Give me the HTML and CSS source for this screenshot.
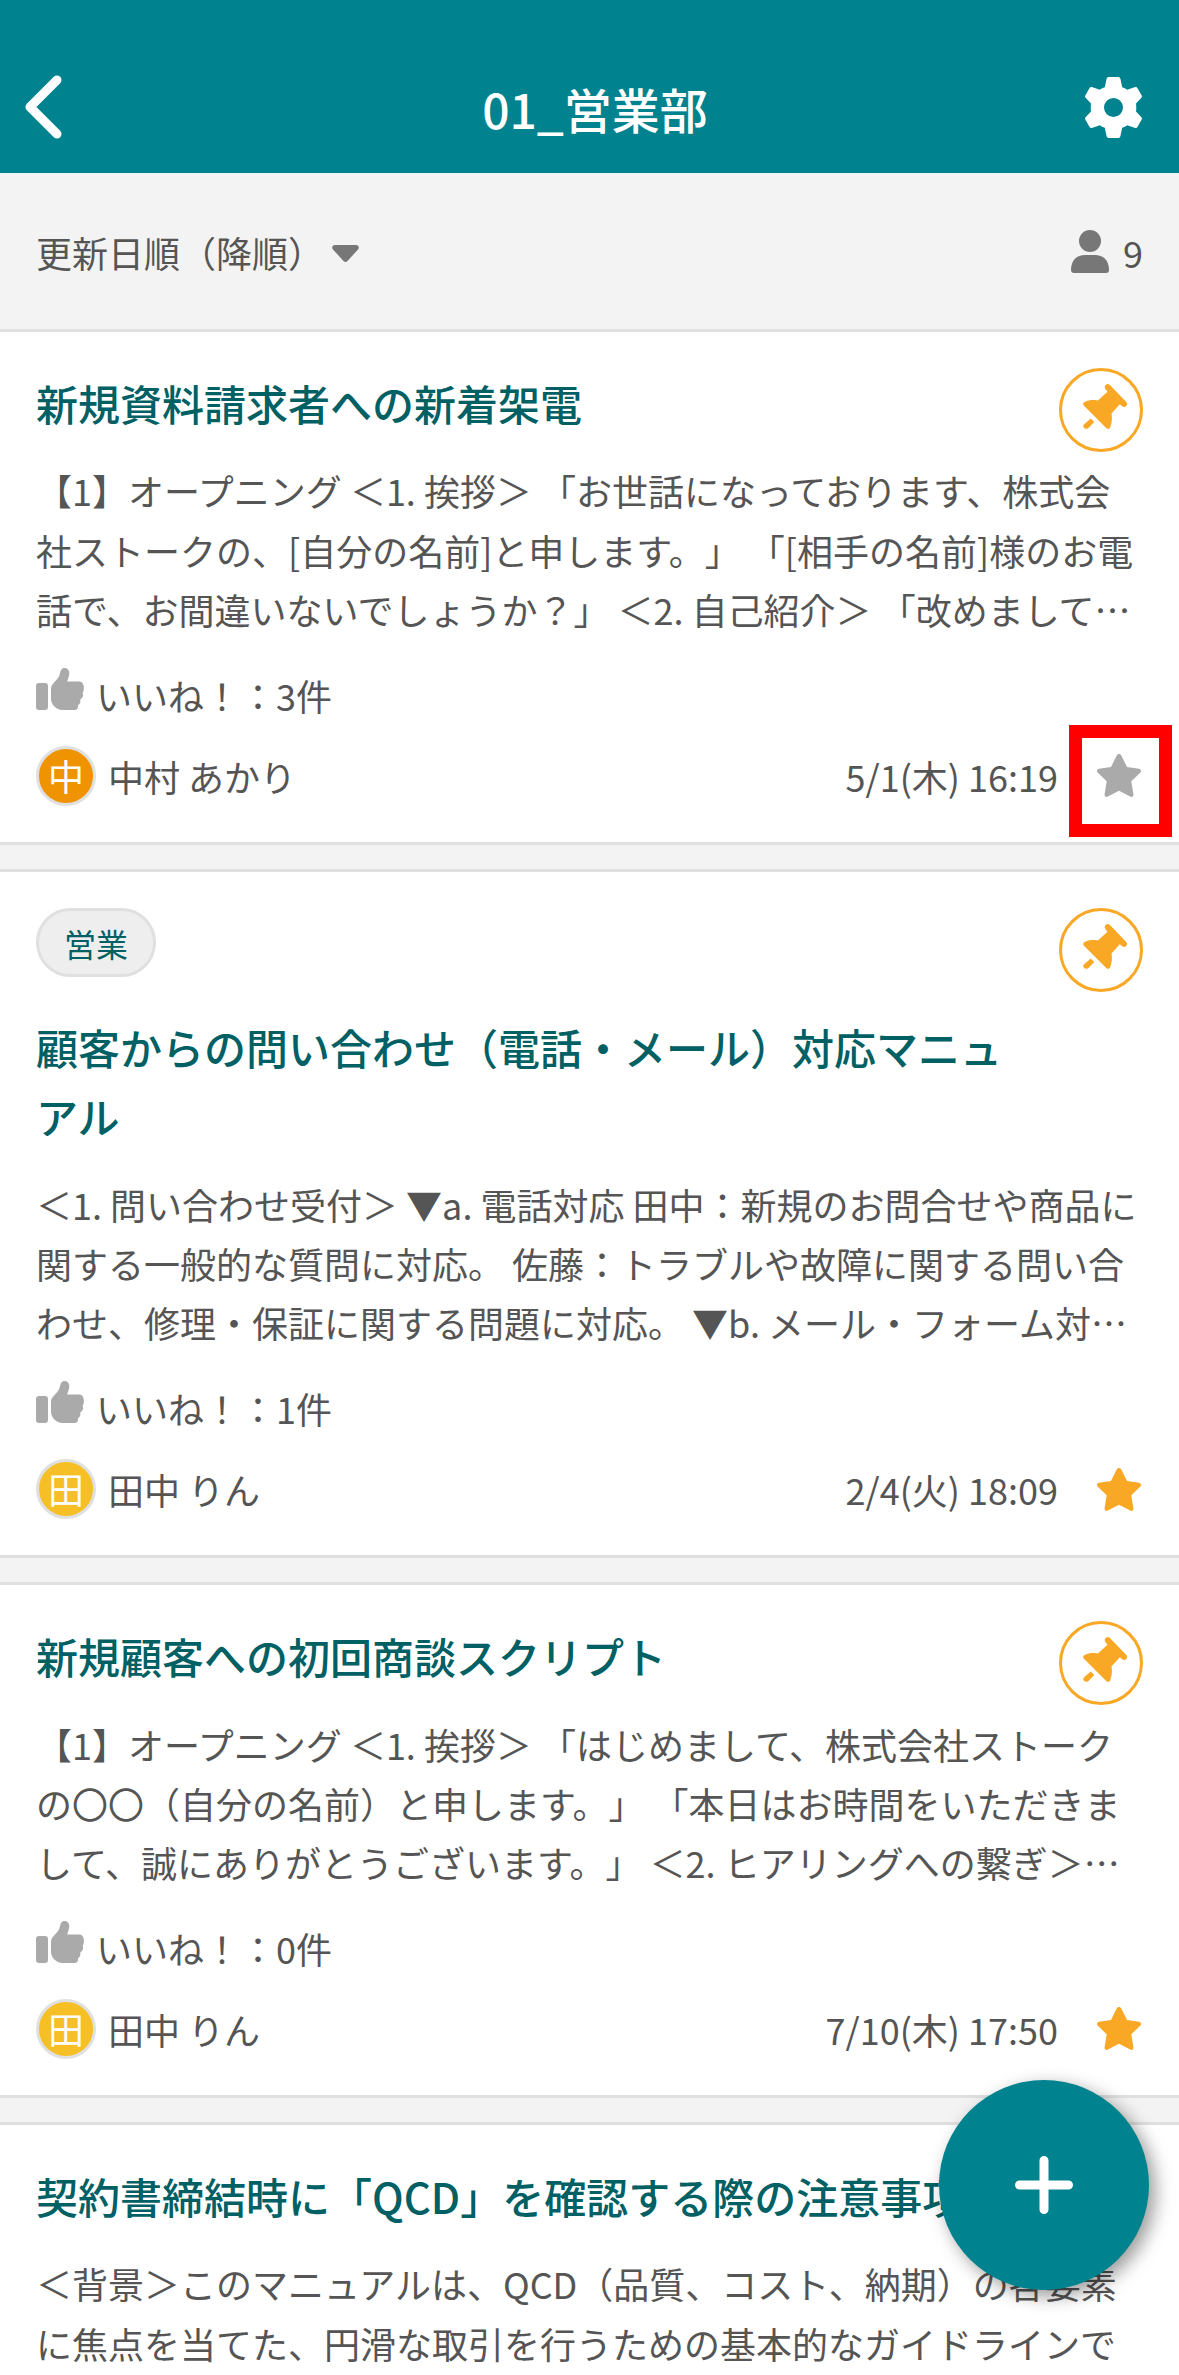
FILE: index.html
```html
<!DOCTYPE html>
<html lang="ja">
<head>
<meta charset="utf-8">
<title>01_営業部</title>
<link rel="stylesheet" href="styles.css">
</head>
<body>
<svg class="sprite" aria-hidden="true">
  <symbol id="thumb" viewBox="0 0 48 42">
    <rect x="0" y="15" width="12" height="27" rx="3"/>
    <path d="M28.5 0C25.600 0 24.600 2.500 24 5.200C23.200 9 21.500 10.800 19.200 13.200C16.500 16 15 17.800 15 20.800V31C15 36 20 42 26.500 42H38.500C41.500 42 42.500 39.500 41.900 37.200C44 36 44.800 33.800 44.200 31.500C47 30 47.700 27.300 46.600 24.800C49 21.500 48.200 13.500 43.500 13.500H31.200C32 10.300 33.300 8 33.300 5C33.300 2 31.400 0 28.500 0Z"/>
  </symbol>
  <symbol id="star" viewBox="0 0 44 43">
    <path d="M19.700 1.500C20.700-.5 23.300-.5 24.300 1.500L30 12.900L42 14.700C44 15 44.600 17.300 43.200 18.700L34.300 27.300L36.400 40.200C36.700 42.300 34.900 43.500 33.200 42.600L22 36.800L10.800 42.600C9.100 43.500 7.300 42.300 7.600 40.200L9.700 27.300L.8 18.700C-.6 17.300 0 15 2 14.700L14 12.900Z"/>
  </symbol>
  <symbol id="pin" viewBox="0 0 44 45">
    <path d="M22.600 1C24 -.3 25.700 -.1 26.900 1.100L43.100 17.800C44.400 19.200 44.400 20.800 43.200 22C42 23.300 40.400 23.200 38.600 21.700L36.800 20.300L28.500 29.500C29.400 34.500 28.700 39 27.200 43.300C26.500 45.200 24.500 45.300 23.200 44L1 21.800C-.3 20.500-.2 18.700 1.700 17.900C5.800 16.200 10.300 15.600 14.900 16.600L24.500 7.800L22.700 5.600C21.500 4 21.400 2.300 22.600 1Z"/>
    <path d="M7.800 34.500L11.200 37.900L5.500 44C2.500 46.500-1.200 42.800.8 40.600Z"/>
  </symbol>
</svg>

<header class="header">
  <svg class="back" viewBox="0 0 38 64"><path d="M33 5L6 32L33 59"/></svg>
  <h1 class="heading">01_営業部</h1>
  <svg class="gear" viewBox="0 0 57 61"><path fill-rule="evenodd" d="M23.500 0H33.500Q35 0 35.400 1.800L37.200 10.200Q40 11 42.200 12.700L50.200 10.100Q51.600 9.600 52.400 10.900L56.700 18.500Q57.300 19.900 56.200 21L51 26.500Q51.500 30.500 51 34.500L56.200 40Q57.300 41.100 56.700 42.500L52.400 50.100Q51.600 51.400 50.200 50.900L42.200 48.300Q40 50 37.200 50.800L35.400 59.200Q35 61 33.500 61H23.500Q22 61 21.600 59.200L19.800 50.800Q17 50 14.800 48.300L6.800 50.900Q5.400 51.400 4.600 50.100L.3 42.500Q-.3 41.100.8 40L6 34.500Q5.500 30.500 6 26.500L.8 21Q-.3 19.900.3 18.500L4.600 10.900Q5.400 9.600 6.800 10.100L14.800 12.700Q17 11 19.800 10.200L21.600 1.800Q22 0 23.500 0ZM28.500 21A9.500 9.500 0 1 0 28.500 40A9.500 9.500 0 1 0 28.500 21Z"/></svg>
</header>

<div class="toolbar">
  <div class="sort"><span>更新日順（降順）</span><svg class="caret" viewBox="0 0 27 17"><path d="M3 0H24C26.500 0 27.700 2.500 26 4.500L15.500 16C14.300 17.300 12.700 17.300 11.500 16L1 4.500C-.7 2.500.5 0 3 0Z"/></svg></div>
  <div class="members"><svg class="person" viewBox="0 0 38 43"><circle cx="19" cy="11" r="11"/><path d="M0 40C0 30 6 25 14 25H24C32 25 38 30 38 40Q38 43 35 43H3Q0 43 0 40Z"/></svg><span>9</span></div>
</div>

<main class="list">
  <article class="card">
    <div class="pin"><svg><use href="#pin"/></svg></div>
    <h2 class="title">新規資料請求者への新着架電</h2>
    <p class="excerpt">【1】オープニング ＜1. 挨拶＞ 「お世話になっております、株式会<br>社ストークの、[自分の名前]と申します。」 「[相手の名前]様のお電<br>話で、お間違いないでしょうか？」 ＜2. 自己紹介＞ 「改めまして…</p>
    <div class="likes"><svg><use href="#thumb"/></svg><span>いいね！：3件</span></div>
    <div class="meta"><span class="avatar orange">中</span><span class="name">中村 あかり</span><time>5/1(木) 16:19</time><span class="fav highlight"><svg><use href="#star"/></svg></span></div>
  </article>

  <article class="card">
    <div class="pin"><svg><use href="#pin"/></svg></div>
    <span class="tag">営業</span>
    <h2 class="title">顧客からの問い合わせ（電話・メール）対応マニュアル</h2>
    <p class="excerpt">＜1. 問い合わせ受付＞ ▼a. 電話対応 田中：新規のお問合せや商品に<br>関する一般的な質問に対応。 佐藤：トラブルや故障に関する問い合<br>わせ、修理・保証に関する問題に対応。 ▼b. メール・フォーム対…</p>
    <div class="likes"><svg><use href="#thumb"/></svg><span>いいね！：1件</span></div>
    <div class="meta"><span class="avatar yellow">田</span><span class="name">田中 りん</span><time>2/4(火) 18:09</time><span class="fav on"><svg><use href="#star"/></svg></span></div>
  </article>

  <article class="card">
    <div class="pin"><svg><use href="#pin"/></svg></div>
    <h2 class="title">新規顧客への初回商談スクリプト</h2>
    <p class="excerpt">【1】オープニング ＜1. 挨拶＞ 「はじめまして、株式会社ストーク<br>の〇〇（自分の名前）と申します。」 「本日はお時間をいただきま<br>して、誠にありがとうございます。」 ＜2. ヒアリングへの繋ぎ＞…</p>
    <div class="likes"><svg><use href="#thumb"/></svg><span>いいね！：0件</span></div>
    <div class="meta"><span class="avatar yellow">田</span><span class="name">田中 りん</span><time>7/10(木) 17:50</time><span class="fav on"><svg><use href="#star"/></svg></span></div>
  </article>

  <article class="card">
    <h2 class="title">契約書締結時に「QCD」を確認する際の注意事項</h2>
    <p class="excerpt">＜背景＞このマニュアルは、QCD（品質、コスト、納期）の各要素<br>に焦点を当てた、円滑な取引を行うための基本的なガイドラインで</p>
  </article>
</main>

<button class="fab" aria-label="追加"><svg viewBox="0 0 58 58"><path d="M29 4.500V53.500M4.500 29H53.500"/></svg></button>
</body>
</html>
```

FILE: styles.css
```css
*, *::after { box-sizing: border-box; }

body {
  margin: 0;
  height: 2375px;
  overflow: hidden;
  position: relative;
  background: #f3f3f3;
  color: #555;
  font: 36px/59.4px "Noto Sans CJK JP", sans-serif;
  text-spacing-trim: space-all;
}

h1, h2, p { margin: 0; }

svg { display: block; flex: none; }

.sprite { position: absolute; width: 0; height: 0; }

.header {
  height: 173px;
  padding: 41px 37px 0 24px;
  display: grid;
  grid-template-columns: 91px 1fr 67px;
  align-items: center;
  background: #00838f;
  color: #fff;
}

.back { width: 38px; height: 64px; fill: none; stroke: #fff; stroke-width: 9; stroke-linecap: round; stroke-linejoin: round; }
.heading { padding-top: 1px; text-align: center; font-size: 48px; line-height: 72px; font-weight: 500; }
.gear { width: 57px; height: 61px; justify-self: end; fill: #fff; }

.toolbar {
  height: 156px;
  padding: 0 36px;
  display: flex;
  justify-content: space-between;
  align-items: center;
}

.sort, .members { display: flex; align-items: center; padding-top: 1px; }
.sort span, .members span { padding-top: 2px; }
.caret { width: 27px; height: 17px; margin: 3px 0 0 8px; fill: #777; }
.person { width: 38px; height: 43px; margin-right: 14px; fill: #777; }

.list { display: flex; flex-direction: column; gap: 24px; }

.card {
  position: relative;
  padding: 36px;
  background: #fff;
  border-top: 3px solid #e0e0e0;
  border-bottom: 3px solid #e0e0e0;
}

.pin {
  position: absolute;
  top: 36px;
  right: 36px;
  width: 84px;
  height: 84px;
  padding: 13px 0 0 21px;
  border: 3px solid #f9a825;
  border-radius: 50%;
  fill: #f9a825;
}
.pin svg { width: 44px; height: 45px; }

.tag {
  display: block;
  width: 120px;
  height: 69px;
  margin-bottom: 35px;
  border: 3px solid #e0e0e0;
  border-radius: 35px;
  background: #eee;
  color: #006064;
  font-size: 32px;
  line-height: 65px;
  text-align: center;
}

.title { width: 984px; color: #006064; font-size: 42px; line-height: 69.3px; font-weight: 500; }
.excerpt { margin-top: 24.2px; white-space: nowrap; }

.likes { display: flex; align-items: flex-start; gap: 12px; height: 59.4px; margin-top: 25.8px; }
.likes svg { width: 48px; height: 42px; margin-top: 2px; fill: #aaa; }

.meta { display: flex; align-items: center; height: 60px; margin-top: 21px; }
.avatar {
  width: 60px;
  height: 60px;
  border: 3px solid #e0e0e0;
  border-radius: 50%;
  color: #fff;
  line-height: 52px;
  text-align: center;
}
.orange { background: #f09300; }
.yellow { background: #f6bf26; }
.name { margin-left: 12px; padding-top: 1px; }
.meta time { margin-left: auto; padding-top: 1px; }

.fav { position: relative; width: 44px; height: 43px; margin: 0 2px 0 39px; fill: #aaa; }
.fav svg { width: 44px; height: 43px; }
.on { fill: #f9a825; }
.highlight::after {
  content: "";
  position: absolute;
  left: -28px;
  top: -29px;
  width: 103px;
  height: 112px;
  border: 13px solid #f00;
}

.fab {
  position: absolute;
  left: 939px;
  top: 2080px;
  width: 210px;
  height: 210px;
  padding: 0;
  display: flex;
  align-items: center;
  justify-content: center;
  border: 0;
  border-radius: 50%;
  background: #00838f;
  box-shadow: 6px 6px 18px rgba(0, 0, 0, .4);
}
.fab svg { width: 58px; height: 58px; stroke: #fff; stroke-width: 9; stroke-linecap: round; }
```
